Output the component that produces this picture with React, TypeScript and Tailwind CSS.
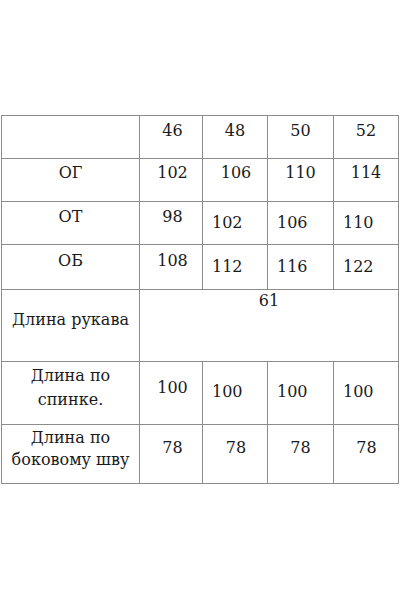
import React from "react";

const sizes = ["46", "48", "50", "52"];

function Cell({ className = "", children }: { className?: string; children?: React.ReactNode }) {
  return <div className={"bg-white " + className}>{children}</div>;
}

export default function App() {
  return (
    <div
      className="w-[400px] h-[600px] bg-white text-[#1a1a1a] text-[16px] leading-[24px]"
      style={{ fontFamily: '"DejaVu Serif", serif' }}
    >
      <div className="pt-[115px] pl-px">
        <div className="grid w-[398px] grid-cols-[137px_62px_64px_65px_64px] grid-rows-[42px_42px_42px_44px_71px_62px_58px] gap-px bg-[#8c8c8c] p-px">
          {/* размеры */}
          <Cell />
          {sizes.map((s, i) => (
            <Cell key={s} className={"pt-[3px] text-center " + (i === 0 ? "pl-[3px]" : "")}>
              {s}
            </Cell>
          ))}

          {/* ОГ */}
          <Cell className="pt-[2px] text-center">ОГ</Cell>
          <Cell className="pt-[2px] pl-[3px] text-center">102</Cell>
          <Cell className="pt-[2px] text-center pl-[2px]">106</Cell>
          <Cell className="pt-[2px] text-center">110</Cell>
          <Cell className="pt-[2px] text-center">114</Cell>

          {/* ОТ */}
          <Cell className="pt-[3px] text-center">ОТ</Cell>
          <Cell className="pt-[3px] pl-[3px] text-center">98</Cell>
          <Cell className="pt-[9px] pl-[9px]">102</Cell>
          <Cell className="pt-[9px] pl-[9px]">106</Cell>
          <Cell className="pt-[9px] pl-[9px]">110</Cell>

          {/* ОБ */}
          <Cell className="pt-[4px] text-center">ОБ</Cell>
          <Cell className="pt-[4px] pl-[3px] text-center">108</Cell>
          <Cell className="pt-[10px] pl-[9px]">112</Cell>
          <Cell className="pt-[10px] pl-[9px]">116</Cell>
          <Cell className="pt-[10px] pl-[9px]">122</Cell>

          {/* рукав */}
          <Cell className="pt-[18px] text-center">Длина рукава</Cell>
          <Cell className="col-span-4 text-center leading-[22px]">61</Cell>

          {/* спинка */}
          <Cell className="pt-[2px] text-center">
            Длина по
            <br />
            спинке.
          </Cell>
          <Cell className="pt-[14px] pl-[3px] text-center">100</Cell>
          <Cell className="pt-[18px] pl-[9px]">100</Cell>
          <Cell className="pt-[18px] pl-[9px]">100</Cell>
          <Cell className="pt-[18px] pl-[9px]">100</Cell>

          {/* боковой шов */}
          <Cell className="pt-[2px] text-center leading-[22px]">
            Длина по
            <br />
            боковому шву
          </Cell>
          <Cell className="pt-[11px] pl-[3px] text-center">78</Cell>
          <Cell className="pt-[11px] pl-[2px] text-center">78</Cell>
          <Cell className="pt-[11px] text-center">78</Cell>
          <Cell className="pt-[11px] pl-[1px] text-center">78</Cell>
        </div>
      </div>
    </div>
  );
}
